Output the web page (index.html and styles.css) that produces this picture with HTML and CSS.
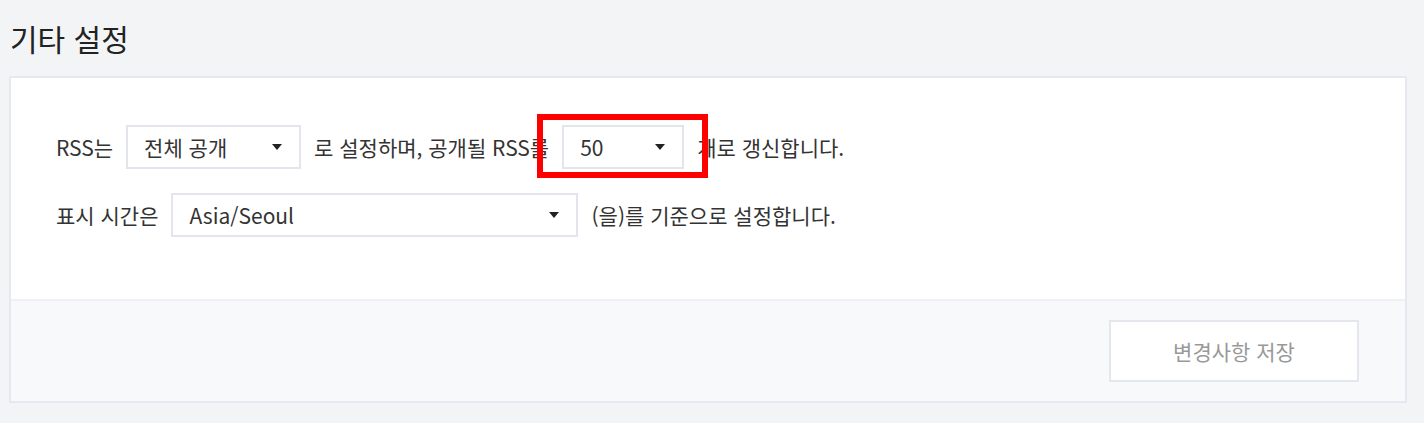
FILE: index.html
```html
<!DOCTYPE html>
<html lang="ko">
<head>
  <meta charset="UTF-8">
  <title>기타 설정</title>
  <link rel="stylesheet" href="styles.css">
</head>
<body>

<div class="settings">
  <h2 class="settings-title">기타 설정</h2>

  <div class="panel">
    <div class="panel-body">
      <div class="row">
        <span>RSS는</span>
        <div class="select select-open">
          <span>전체 공개</span>
          <span class="caret"></span>
        </div>
        <span>로 설정하며, 공개될 RSS를</span>
        <div class="select select-count highlight">
          <span>50</span>
          <span class="caret"></span>
        </div>
        <span>개로 갱신합니다.</span>
      </div>

      <div class="row">
        <span>표시 시간은</span>
        <div class="select select-zone">
          <span>Asia/Seoul</span>
          <span class="caret"></span>
        </div>
        <span>(을)를 기준으로 설정합니다.</span>
      </div>
    </div>

    <div class="panel-footer">
      <button class="save-btn">변경사항 저장</button>
    </div>
  </div>
</div>

</body>
</html>
```

FILE: styles.css
```css
body {
  margin: 0;
  background: #f3f4f6;
  font-family: "Noto Sans CJK KR", "Noto Sans", sans-serif;
  color: #333;
}

.settings {
  padding: 16px 17px 21px 9px;
}

.settings-title {
  margin: 0 0 16px 1px;
  font-size: 30px;
  font-weight: 400;
  line-height: 44px;
  color: #222;
}

.panel {
  border: 2px solid #e6e8ef;
  background: #fff;
}

.panel-body {
  display: flex;
  flex-direction: column;
  gap: 24px;
  padding: 47px 46px 62px 45px;
  border-bottom: 2px solid #eef0f4;
}

.row {
  display: flex;
  align-items: center;
  gap: 13px;
  font-size: 21px;
}

.select {
  position: relative;
  display: flex;
  align-items: center;
  justify-content: space-between;
  box-sizing: border-box;
  height: 44px;
  padding: 0 17px 0 16px;
  border: 2px solid #e2e5ec;
  background: #fff;
  font-size: 21px;
}

.select-open {
  width: 175px;
}

.select-count {
  width: 122px;
}

.select-zone {
  width: 407px;
}

.caret {
  width: 0;
  height: 0;
  border-left: 5px solid transparent;
  border-right: 5px solid transparent;
  border-top: 6px solid #222;
}

.highlight::after {
  content: "";
  position: absolute;
  left: -27px;
  top: -13px;
  right: -26px;
  bottom: -11px;
  border: 6px solid #ff0000;
}

.panel-footer {
  display: flex;
  justify-content: flex-end;
  padding: 19px 46px 19px;
  background: #f8f9fb;
}

.save-btn {
  width: 250px;
  height: 62px;
  border: 2px solid #e4e7ee;
  background: #fff;
  color: #999;
  font-family: inherit;
  font-size: 21px;
}
```
